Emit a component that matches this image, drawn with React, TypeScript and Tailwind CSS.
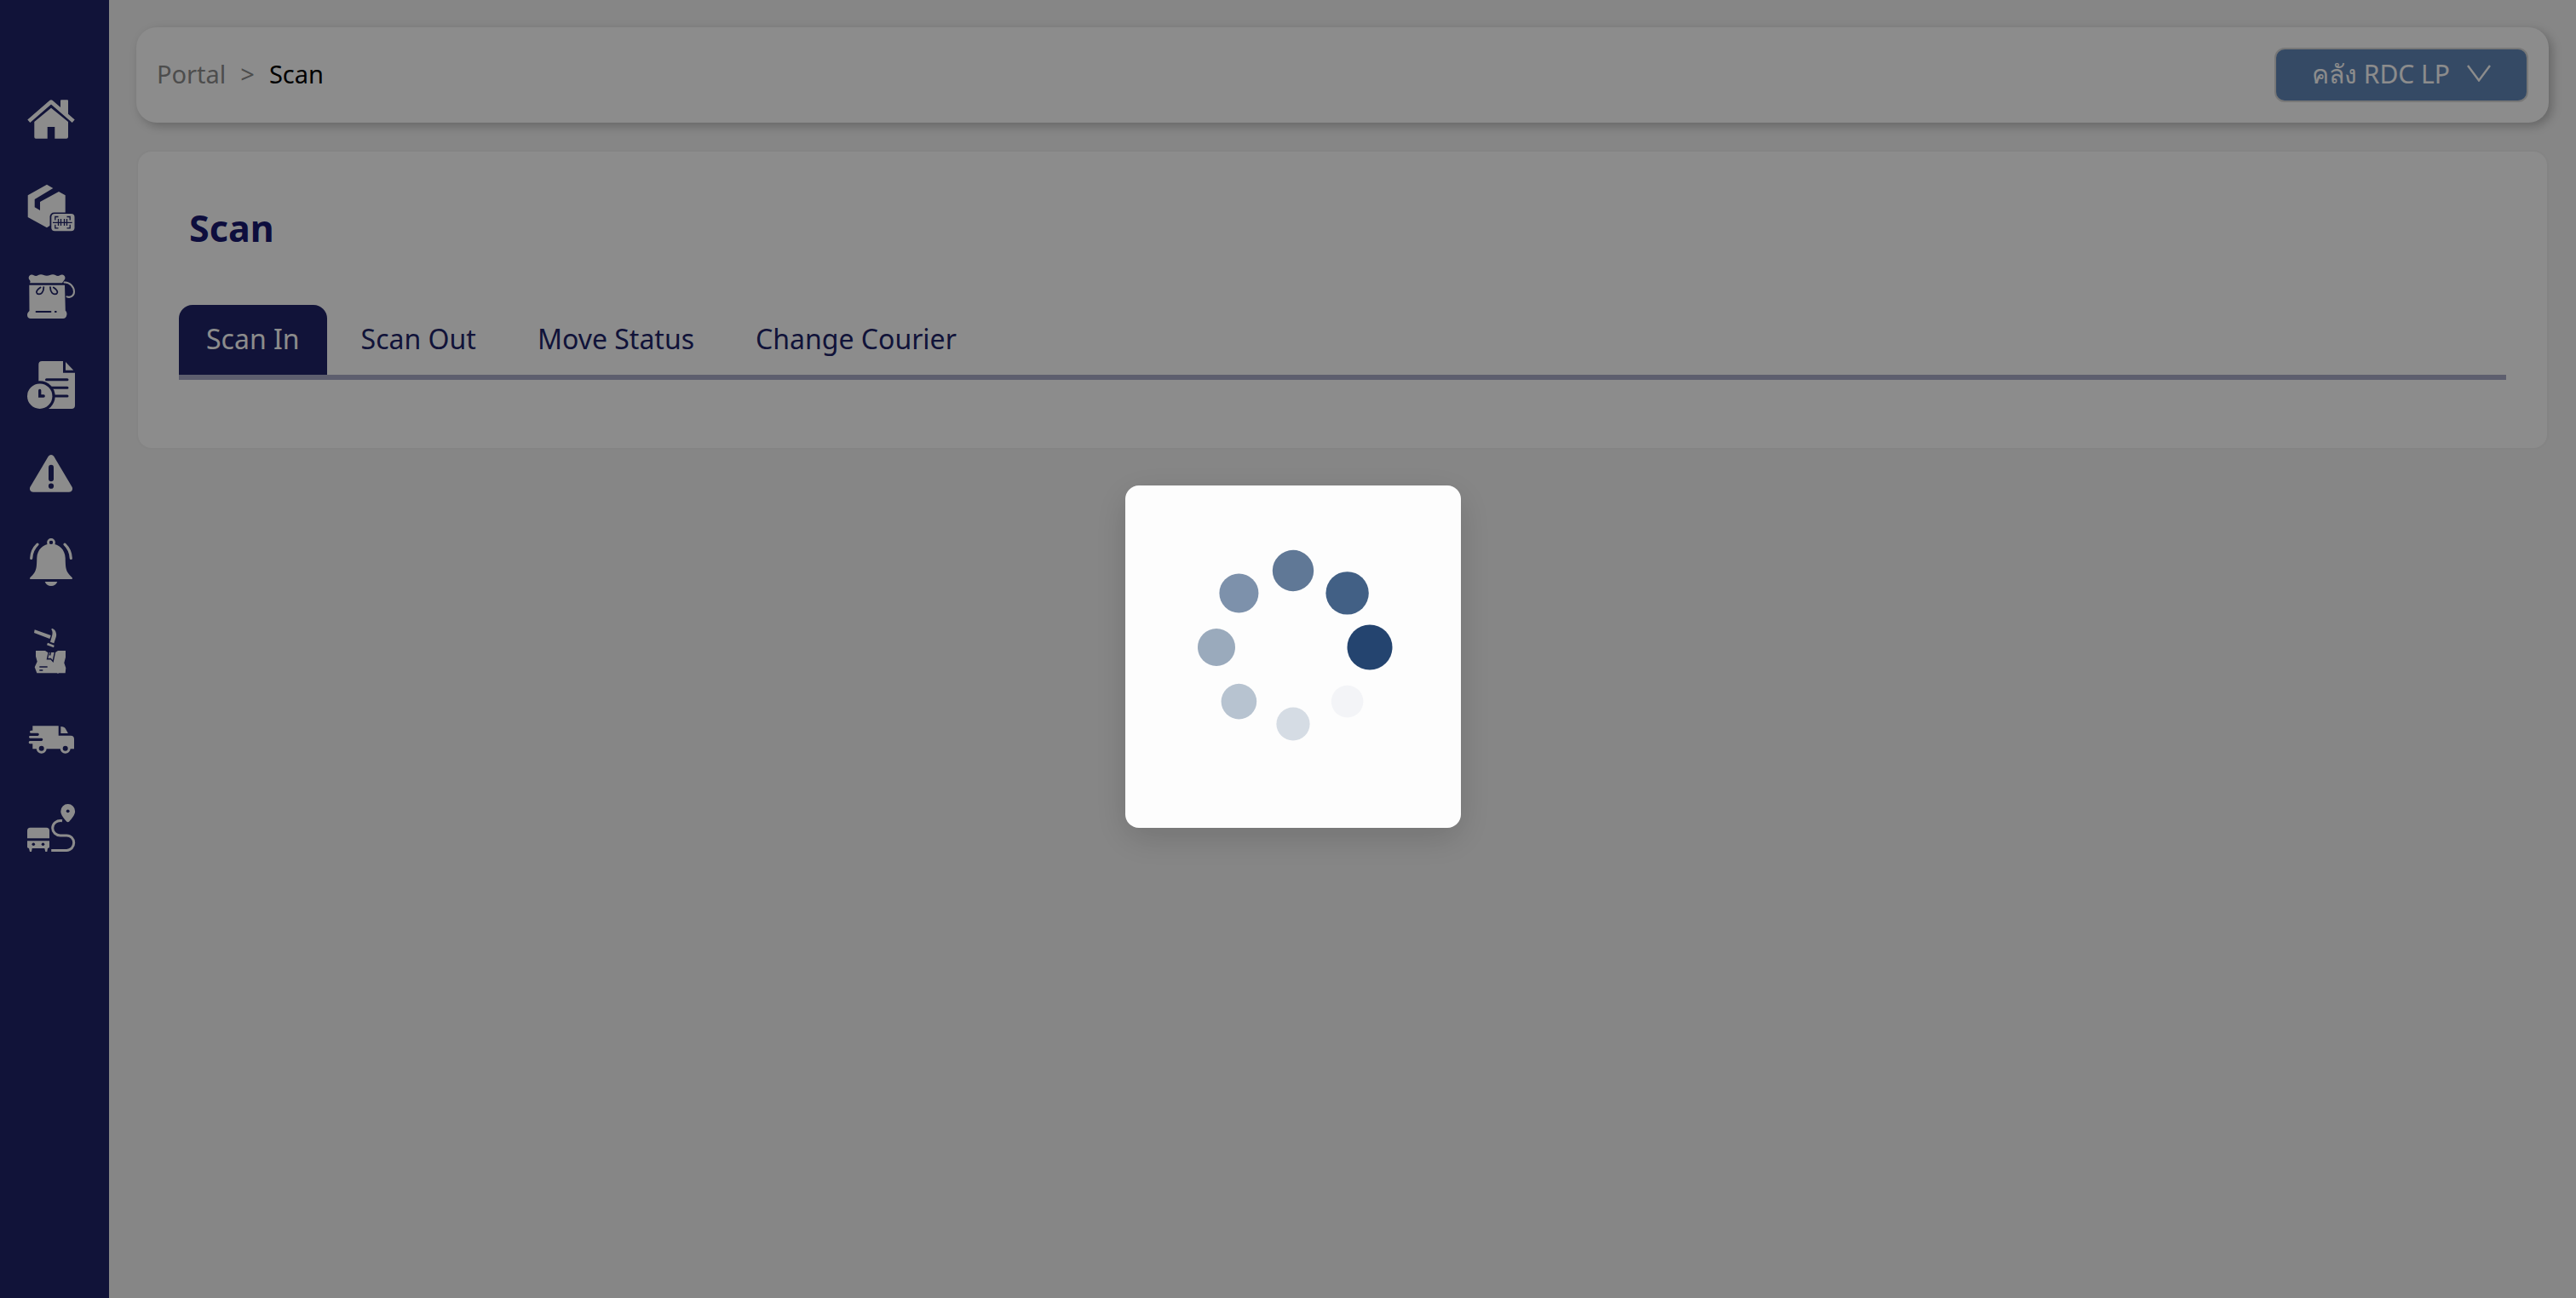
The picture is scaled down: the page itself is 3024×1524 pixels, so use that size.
import type { ReactNode } from "react";

const NAVY = "#202468";

const navItems: { label: string; icon: ReactNode }[] = [
  {
    label: "Home",
    icon: (
      <>
        <path d="M1.8 30.2 28 7.6l26.2 22.6" fill="none" stroke="currentColor" strokeWidth="4.6" strokeLinejoin="round" />
        <path d="M39 6.3a1 1 0 0 1 1-1h7a1 1 0 0 1 1 1V24l-9-8z" />
        <path d="M28 14.7 8.3 31v18a1.7 1.7 0 0 0 1.7 1.7h13.7V37h8.6v13.7H46a2 2 0 0 0 2-1.7V31z" />
      </>
    ),
  },
  {
    label: "Parcel scan",
    icon: (
      <>
        <path d="M23 .7 30.3 5 8.7 18v9.3L15 31V21L37 9l7.7 4.3V37L23 51.3.7 39V13.3z" />
        <rect x="26.500" y="33.500" width="30.500" height="23.500" rx="5" fill={NAVY} />
        <rect x="28.3" y="35" width="27.2" height="20.3" rx="4" />
        <g fill="none" stroke={NAVY} strokeWidth="1.3">
          <path d="M36.5 38.5h-3.7v4M46.5 38.5h3.7v4M36.5 51.8h-3.7v-4M46.5 51.8h3.7v-4M30 45.3h22.7" />
          <path d="M36.5 41v8M39.5 41v8M43.5 41v8M46.5 41v8" />
        </g>
      </>
    ),
  },
  {
    label: "Bags",
    icon: (
      <>
        <path d="M3 12.3c1-1.300.6-2.300-.3-3.500C.6 6 2 2.700 5 2.400c2-.2 3.200 1.600 5 1.600 2.300 0 3.500-1.700 6-1.700 2.700 0 4 1.500 7 1.500s4.300-1.500 7-1.500c2.500 0 3.700 1.700 6 1.700 1.800 0 3-1.800 5-1.600 3 .3 4.600 3.600 2.600 6.200-.9 1.200-1.600 2.200-2.600 3.700z" />
        <path d="M2.300 14.700H44l.8 30c1.500 1.300 2 3.300 1.500 5.300-.5 2.600-2 4-4.300 4H4c-2.300 0-4-1.600-4-4 0-2 .8-3.500 2.500-5z" />
        <path d="M43.500 11.500C50 11 55 17 55 22.500c0 5-4.500 7.500-8.500 5.800" fill="none" stroke="currentColor" strokeWidth="2" strokeLinecap="round" />
        <g fill="none" stroke={NAVY} strokeWidth="1.800" strokeLinecap="round">
          <path d="M15.500 17.500c-3 2-5 4-4.500 6 .7 2.500 4.500 2.500 6.300.2 1.600-2 2-4 2-6.500M30.800 17.500c3 2 5 4 4.500 6-.7 2.500-4.500 2.500-6.300.2-1.600-2-2-4-2-6.500M10.500 46h17M32.800 46h1" />
        </g>
      </>
    ),
  },
  {
    label: "Pending documents",
    icon: (
      <>
        <path d="M17.300 0H42v13.700h14V52a4 4 0 0 1-4 4H13.300V4a4 4 0 0 1 4-4z" />
        <path d="M45 1v9.700h9.300z" />
        <path d="M22.500 21.700h24.500M26 31.300h21M28 41h19" fill="none" stroke={NAVY} strokeWidth="3" strokeLinecap="round" />
        <circle cx="14.700" cy="41.200" r="18" fill={NAVY} />
        <circle cx="14.700" cy="41.200" r="14.700" />
        <path d="M14.700 34.500V41h4.500" fill="none" stroke={NAVY} strokeWidth="3.300" strokeLinecap="round" />
      </>
    ),
  },
  {
    label: "Problems",
    icon: (
      <>
        <path d="M24.800 7.800a3.800 3.800 0 0 1 6.400 0l21.200 35.700c1.700 2.900-.1 6.200-3.400 6.200H7c-3.300 0-5.100-3.300-3.400-6.200z" />
        <path d="M28 20.700v13.500" fill="none" stroke={NAVY} strokeWidth="6" strokeLinecap="round" />
        <circle cx="28" cy="42.700" r="3.100" fill={NAVY} />
      </>
    ),
  },
  {
    label: "Notifications",
    icon: (
      <>
        <circle cx="28" cy="4.900" r="3.500" fill="none" stroke="currentColor" strokeWidth="2.800" />
        <path d="M28 6.500c-9.500 0-16.300 7-16.700 16.500-.2 9-.3 13.500-3 17.500-1.600 2.400-3.600 4.300-5 5.800-.8.900-.3 1.700.7 1.700h48c1 0 1.500-.8.700-1.700-1.400-1.500-3.400-3.400-5-5.800-2.700-4-2.800-8.500-3-17.500C44.300 13.500 37.500 6.500 28 6.500z" />
        <circle cx="28" cy="4.900" r="2" fill={NAVY} />
        <path d="M20.700 51h14.600c-1.300 3.300-4 5-7.300 5s-6-1.700-7.300-5z" />
        <path d="M12 7.200C7.500 11.500 5 17 4.700 23.500M44 7.200c4.500 4.300 7 9.800 7.300 16.300" fill="none" stroke="currentColor" strokeWidth="3.200" strokeLinecap="round" />
      </>
    ),
  },
  {
    label: "Damaged parcels",
    icon: (
      <>
        <path d="m8.700 3.300 19 6.600-1.300 4.100L8 7z" />
        <path d="M29 1.700c3 1 4.500 3 5 6.300.2 1.500.2 2.500-.2 3.700l-2.500 7.600-4.300-1.600 2.300-8.300c.5-2.500.4-4.500-1-6.400z" />
        <path d="m24 18.700 7.700 3-.7 2.500-8-3z" />
        <path d="M10 28h11l3 2h9l3-2h9v7.700l-1.700 6.600 2 6-.6 6H37l-1 .7-1-.7H11.300l-2.600-7 3-6.600-1.700-6z" />
        <g fill="none" stroke={NAVY} strokeWidth="1.400">
          <path d="m25.300 29.300-1.800 8.500 4-.3 2.700 3 2.300-11M27.500 30l-1 3.500M14.300 47h9.400M14.300 51h4" />
        </g>
      </>
    ),
  },
  {
    label: "Deliveries",
    icon: (
      <>
        <path d="M6.300 12.300h30.400v11.400H51c2.700 0 4 1.300 4 4v11.600H6.300v-6H3a1.700 1.700 0 0 1 0-3.300h14a1.700 1.700 0 0 0 0-3.300H3a1.400 1.400 0 0 1 0-2.700h9.500a1.700 1.700 0 0 0 0-3.300H4.500a1.500 1.500 0 0 1 0-3h1.800z" />
        <path d="M39.300 13c3 0 4.600.8 5.700 2.700l2.900 5.300h-8.600z" />
        <circle cx="16.700" cy="38.700" r="4.500" fill={NAVY} stroke="currentColor" strokeWidth="3" />
        <circle cx="44.700" cy="38.700" r="4.500" fill={NAVY} stroke="currentColor" strokeWidth="3" />
      </>
    ),
  },
  {
    label: "Routes",
    icon: (
      <>
        <path d="M47.700 0a8.400 8.400 0 0 1 8.400 8.400c0 4.600-4.200 8.600-6.800 12.100a2 2 0 0 1-3.200 0c-2.600-3.500-6.800-7.500-6.800-12.100A8.400 8.400 0 0 1 47.700 0z" />
        <circle cx="47.700" cy="8.300" r="1.900" fill={NAVY} />
        <path d="M41 19.700c-6.500-1-11.300 3.500-11.300 8.500 0 4.800 4 8.700 9 8.700h7.500c5 0 8.500 4 8.500 8.700s-3.500 8.800-8.500 8.800h-18" fill="none" stroke="currentColor" strokeWidth="3" />
        <path d="M3.500 27.700h19a3.500 3.500 0 0 1 3.500 3.500v9.100H0v-9.100a3.500 3.500 0 0 1 3.500-3.500z" />
        <path d="M0 43.300h26v7c0 1.200-.8 1.700-2 1.700l-.7 4h-2l-1-4H5.700l-.7 4H3l-1-4c-1.200 0-2-.5-2-1.700z" />
        <circle cx="7.300" cy="47.300" r="1.800" fill={NAVY} />
        <circle cx="18.500" cy="47.300" r="1.800" fill={NAVY} />
      </>
    ),
  },
];

const tabs = ["Scan In", "Scan Out", "Move Status", "Change Courier"];

const dots = [
  { cx: 190, cy: 100, r: 26.5, fill: "#24446f" },
  { cx: 163.600, cy: 36.400, r: 25.200, fill: "#426085" },
  { cx: 100, cy: 10, r: 24.200, fill: "#607896" },
  { cx: 36.400, cy: 36.400, r: 23, fill: "#7d91ab" },
  { cx: 10, cy: 100, r: 22, fill: "#9aaabc" },
  { cx: 36.400, cy: 163.600, r: 20.800, fill: "#b7c3d0" },
  { cx: 100, cy: 190, r: 19.600, fill: "#d5dce4" },
  { cx: 163.600, cy: 163.600, r: 18.800, fill: "#f3f4f7" },
];

function Sidebar() {
  return (
    <nav aria-label="Main" className="flex w-32 shrink-0 flex-col gap-12 bg-[#202468] pt-28 pl-8 text-white">
      {navItems.map((item) => (
        <a key={item.label} href="#" aria-label={item.label} className="size-14">
          <svg viewBox="0 0 56 56" fill="currentColor" className="size-14 overflow-visible" aria-hidden="true">
            {item.icon}
          </svg>
        </a>
      ))}
    </nav>
  );
}

function Header() {
  return (
    <header className="flex items-center justify-between rounded-3xl bg-white p-6 shadow-[4px_4px_12px_rgba(0,0,0,0.24)]">
      <ol className="flex gap-[17px] pb-0.5 text-[29px] leading-10">
        <li><a href="#" className="text-[#8c8c8c]">Portal</a></li>
        <li aria-hidden="true" className="text-[#8c8c8c]">&gt;</li>
        <li aria-current="page" className="text-black">Scan</li>
      </ol>
      <button type="button" className="flex h-16 items-center gap-5 rounded-xl border-2 border-[#d9d9d9] bg-[#6288b9] px-[42px] pb-1 text-[30px] text-white">
        คลัง RDC LP
        <svg viewBox="0 0 28 20" className="h-5 w-7" fill="none" stroke="currentColor" strokeWidth="2.400" aria-hidden="true">
          <path d="m1 1 13 17.500L27 1" />
        </svg>
      </button>
    </header>
  );
}

function ScanCard() {
  return (
    <section className="mt-8 rounded-[18px] border-2 border-[#f0f0f0] bg-white px-12 pt-14 pb-20">
      <h1 className="pl-3 text-[43px] leading-[68px] font-bold text-[#191970]">Scan</h1>
      <div role="tablist" className="mt-14 flex gap-2 border-b-6 border-[#a9abc9] text-[32px] text-[#202468]">
        {tabs.map((tab, i) => (
          <button
            key={tab}
            type="button"
            role="tab"
            aria-selected={i === 0}
            className={
              i === 0
                ? "h-[82px] rounded-t-2xl bg-[#202468] px-8 pb-0.5 text-white"
                : "h-[82px] rounded-t-2xl px-8 pb-0.5"
            }
          >
            {tab}
          </button>
        ))}
      </div>
    </section>
  );
}

function LoadingDialog() {
  return (
    <div className="fixed inset-0 flex items-center justify-center bg-black/45 pt-[18px] pl-3">
      <div role="dialog" aria-label="Loading" className="rounded-2xl bg-[#fdfdfd] px-[97px] pt-[90px] pb-28 shadow-[0_12px_40px_rgba(0,0,0,0.15)]">
        <svg viewBox="0 0 200 200" className="size-[200px] overflow-visible" aria-hidden="true">
          {dots.map((dot) => (
            <circle key={dot.fill} {...dot} />
          ))}
        </svg>
      </div>
    </div>
  );
}

export default function App() {
  return (
    <div className="flex min-h-screen bg-[#f4f4f4] font-['Noto_Sans','Open_Sans',sans-serif]">
      <Sidebar />
      <main className="min-w-0 flex-1 p-8">
        <Header />
        <ScanCard />
      </main>
      <LoadingDialog />
    </div>
  );
}
